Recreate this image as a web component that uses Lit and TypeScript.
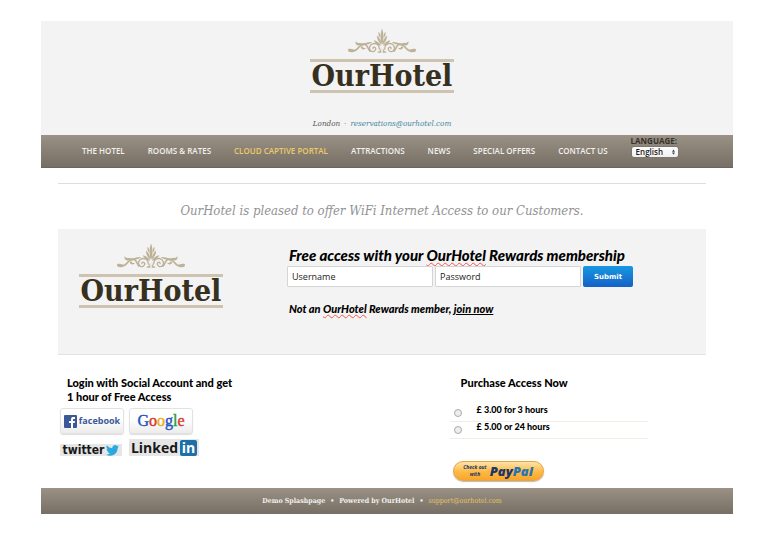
import { LitElement, html, css, svg } from "lit";
import { customElement } from "lit/decorators.js";

const half = svg`
  <path d="M271 72 C263 64 258 54 259 46 C264 48 270 58 272 68 Z"/>
  <path d="M269 76 C260 73 252 66 249 59 C257 59 265 66 271 74 Z"/>
  <path d="M271 78 C271 88 268 92 261 94 V97 H272 Z"/>
  <path d="M266 86 C267 74 258 68 249 69 C237 71 233 84 240 91 C247 97 257 91 255 83 C253 78 246 79 247 84" fill="none" stroke-width="4"/>
  <path d="M238 92 C231 86 232 73 222 72 C212 71 206 78 200 85 C194 92 182 94 175 91" fill="none" stroke-width="5"/>
  <path d="M172 86 C178 83 183 88 192 87 C188 95 174 97 172 86 Z"/>
  <path d="M244 66 C236 62 228 70 214 68 C204 67 198 68 195 62 C193 70 198 75 206 75 C220 74 232 74 244 66 Z"/>
  <path d="M210 80 C213 88 222 89 226 82 C222 84 217 82 215 77 Z"/>`;

@customElement("hotel-logo")
export class HotelLogo extends LitElement {
  static styles = css`
    :host { display: flex; flex-direction: column; align-items: center; width: 144px; }
    .ornament { width: 70px; height: 27px; display: block; fill: #bdb198; stroke: #bdb198; stroke-linecap: round; stroke-width: 0; }
    .name {
      box-sizing: border-box; width: 100%; height: 34px; margin-top: 5px;
      border-top: 3px solid #cdc3b0; border-bottom: 3px solid #cdc3b0;
      font: bold 30px/28px "DejaVu Serif Condensed", "DejaVu Serif", serif;
      color: #37301f; text-align: center; white-space: nowrap;
    }
  `;
  render() {
    return html`
      <svg class="ornament" viewBox="169 20 210 80" aria-hidden="true">
        <path d="M274 74 C268 58 268 40 274 24 C280 40 280 58 274 74 Z"/>
        <path d="M263 34 C268 37 269 43 269 52 L264 46 Z M285 34 C280 37 279 43 279 52 L284 46 Z"/>
        <g>${half}</g>
        <g transform="translate(548 0) scale(-1 1)">${half}</g>
      </svg>
      <div class="name">OurHotel</div>
    `;
  }
}

@customElement("app-root")
export class AppRoot extends LitElement {
  static styles = css`
    :host { display: block; padding: 21px 31px 36px 41px; background: #fff; font-family: Lato, "Liberation Sans", sans-serif; color: #000; }
    a { color: inherit; text-decoration: none; }
    h1, h2, p { margin: 0; }
    button, input, select { font-family: inherit; margin: 0; box-sizing: border-box; }
    fieldset { border: 0; margin: 0; padding: 0; min-width: 0; }

    .top { display: flex; flex-direction: column; align-items: center; gap: 25px; padding: 6px 10px 5px 0; background: #f3f3f3; }
    .contact { font: italic 8px/12px "DejaVu Serif Condensed", "DejaVu Serif", serif; color: #555; display: flex; gap: 4px; }
    .contact a { color: #3f87a0; }

    .bar { background: linear-gradient(#9b9186, #888074 50%, #776e65); color: #f2f0ed; }
    .nav { display: flex; align-items: center; gap: 23px; height: 33px; padding-left: 41px; box-sizing: border-box; border-bottom: 1px solid #6d655d; font: 600 8px/12px "Open Sans", sans-serif; white-space: nowrap; }
    .current { color: #edc969; }
    .language { display: flex; flex-direction: column; align-self: flex-start; color: #37322b; font: bold 8px/11px "Open Sans", sans-serif; }
    .pick { position: relative; display: block; width: 48px; height: 12px; }
    .pick select { display: block; width: 100%; height: 100%; appearance: none; border: 1px solid #7d766e; border-radius: 3px; background: linear-gradient(#fff, #f0f0f0); padding: 0 4px; font: 600 8px/10px "Open Sans", sans-serif; color: #222; }
    .pick svg { position: absolute; right: 4px; top: 3px; width: 3px; height: 6px; fill: #444; pointer-events: none; }

    .content { margin: 15px 27px 0 17px; }
    .tagline { border-top: 1px solid #dedede; padding: 18px 0 9px; font: italic 13px/18px "DejaVu Serif Condensed", "DejaVu Serif", serif; color: #929292; text-align: center; white-space: nowrap; }
    .panel { display: flex; gap: 64px; align-items: flex-start; background: #f3f3f3; border-bottom: 1px solid #e3e3e3; padding: 13px 20px 37px 21px; }
    .login { padding-top: 2px; }
    .login h2 { font: italic 900 15px/22px Lato, sans-serif; padding-left: 2px; white-space: nowrap; }
    .typo { text-decoration: underline wavy #f0584d 1px; text-underline-offset: 1px; }
    .fields { display: flex; gap: 2px; }
    .fields input { width: 146px; height: 21px; border: 1px solid #d5d5d5; border-radius: 1px; background: #fff; padding: 0 4px; font: 500 9px/14px "Open Sans", sans-serif; color: #222; }
    .fields input::placeholder { color: #222; opacity: 1; }
    .submit { width: 50px; height: 21px; border: 0; border-radius: 2px; background: linear-gradient(#1798e0, #1560c8); color: #fff; font: bold 7px/12px "DejaVu Sans", sans-serif; padding: 0; }
    .note { margin-top: 14px; padding-left: 2px; font: italic 900 11px/16px Lato, sans-serif; }
    .note .join { text-decoration: underline; }

    .options { display: grid; grid-template-columns: 391fr 256fr; padding: 21px 0 7px; }
    .options h2 { font: 900 11px/14px Lato, sans-serif; }
    .social h2 { padding-left: 9px; }
    .brands { display: grid; grid-template-columns: 64px 70px; gap: 5px; padding: 4px 0 0 2px; justify-items: start; align-items: center; }
    .brands button { border: 0; padding: 0; display: flex; align-items: center; justify-content: center; white-space: nowrap; }
    .brands .card { width: 64px; height: 26px; border: 1px solid #e2e2e2; border-radius: 3px; background: linear-gradient(#fff 40%, #ececec); box-shadow: 0 1px 1px #ddd; }
    .brands .facebook { gap: 2px; color: #3b5998; font: bold 9px/14px "Open Sans", sans-serif; }
    .facebook svg { width: 13px; height: 13px; flex: none; }
    .google { font: 16px/20px "Liberation Serif", serif; -webkit-text-stroke: 0.4px; }
    .g1 { color: #2453c4; } .g2 { color: #d43a2c; } .g3 { color: #e9b01c; } .g4 { color: #1f9a45; }
    .twitter { width: 62px; height: 12px; margin-top: 5px; background: #e6e6e6; color: #181818; gap: 2px; font: bold 12px/12px "DejaVu Sans Condensed", "DejaVu Sans", sans-serif; }
    .twitter svg { width: 13px; height: 11px; fill: #2aa9e0; flex: none; }
    .linkedin { width: 70px; height: 17px; background: #e6e6e6; color: #181818; gap: 2px; font: bold 14px/17px "Open Sans", sans-serif; }
    .in { background: #1d6fa8; color: #fff; border-radius: 2px; width: 17px; height: 16px; line-height: 15px; }

    .purchase h2 { padding-left: 11px; }
    .plans { margin-top: 15px; width: 198px; }
    .plan { display: flex; align-items: center; gap: 15px; height: 17px; box-sizing: border-box; border-bottom: 1px solid #f1ede2; font: 900 9px/12px Lato, sans-serif; }
    .plan span { padding-bottom: 7px; }
    .plan input { appearance: none; width: 8px; height: 8px; margin: 0 0 0 4px; border: 1px solid #aaa; border-radius: 50%; background: #eee; }
    .paypal { display: flex; align-items: center; justify-content: center; gap: 3px; width: 91px; height: 20px; margin: 22px 0 0 3px; padding: 0; border: 1px solid #e8a33b; border-radius: 10px; background: linear-gradient(#ffe3a8, #fdb945 55%, #f9a528); box-shadow: 0 1px 1px #bbb; color: #1d3667; }
    .checkout { display: flex; flex-direction: column; font: italic bold 5px/7px "Open Sans", sans-serif; text-align: center; }
    .pp { font: italic 800 13px/16px "Open Sans", sans-serif; }
    .pal { color: #2475b5; }

    .foot { height: 26px; display: flex; align-items: center; justify-content: center; gap: 5px; padding-right: 10px; font: bold 7px/12px "DejaVu Serif Condensed", "DejaVu Serif", serif; }
    .foot a { color: #e8c264; font-weight: normal; }
  `;

  render() {
    const links = ["THE HOTEL", "ROOMS & RATES", "CLOUD CAPTIVE PORTAL", "ATTRACTIONS", "NEWS", "SPECIAL OFFERS", "CONTACT US"];
    return html`
      <header>
        <div class="top">
          <hotel-logo></hotel-logo>
          <div class="contact"><span>London</span><span>·</span><a href="#">reservations@ourhotel.com</a></div>
        </div>
        <nav class="bar nav">
          ${links.map((t, i) => html`<a href="#" class=${i === 2 ? "current" : ""}>${t}</a>`)}
          <label class="language">LANGUAGE:
            <span class="pick">
              <select><option>English</option></select>
              <svg viewBox="0 0 4 7"><path d="M2 0L4 3H0ZM2 7L0 4H4Z"/></svg>
            </span>
          </label>
        </nav>
      </header>
      <main class="content">
        <p class="tagline">OurHotel is pleased to offer WiFi Internet Access to our Customers.</p>
        <section class="panel">
          <hotel-logo></hotel-logo>
          <form class="login">
            <h2>Free access with your <span class="typo">OurHotel</span> Rewards membership</h2>
            <div class="fields">
              <input type="text" aria-label="Username" placeholder="Username">
              <input type="password" aria-label="Password" placeholder="Password">
              <button class="submit" type="button">Submit</button>
            </div>
            <p class="note">Not an <span class="typo">OurHotel</span> Rewards member, <a class="join" href="#">join now</a></p>
          </form>
        </section>
        <div class="options">
          <section class="social">
            <h2>Login with Social Account and get<br>1 hour of Free Access</h2>
            <div class="brands">
              <button class="card facebook"><svg viewBox="0 0 13 13"><rect width="13" height="13" rx="1" fill="#3b5998"/><path d="M7 13V8H5V6H7V4.500C7 2.500 8 2 9.500 2H11V4H10C9.300 4 9 4.300 9 5V6H11L10.700 8H9V13Z" fill="#fff"/></svg>facebook</button>
              <button class="card google"><span class="g1">G</span><span class="g2">o</span><span class="g3">o</span><span class="g1">g</span><span class="g4">l</span><span class="g2">e</span></button>
              <button class="twitter">twitter<svg viewBox="0 0 24 20"><path d="M24 2.400a10 10 0 0 1-2.800.8A5 5 0 0 0 23.300.4a10 10 0 0 1-3.100 1.200A4.900 4.900 0 0 0 11.800 6 14 14 0 0 1 1.700.9a4.900 4.900 0 0 0 1.500 6.600A5 5 0 0 1 1 6.900a4.900 4.900 0 0 0 3.900 4.900 5 5 0 0 1-2.200.1 4.900 4.900 0 0 0 4.600 3.400A10 10 0 0 1 0 17.400 14 14 0 0 0 21.500 5 10 10 0 0 0 24 2.400Z"/></svg></button>
              <button class="linkedin">Linked<span class="in">in</span></button>
            </div>
          </section>
          <section class="purchase">
            <h2>Purchase Access Now</h2>
            <fieldset class="plans" aria-label="Access plans">
              <label class="plan"><input type="radio" name="plan"><span>£ 3.00 for 3 hours</span></label>
              <label class="plan"><input type="radio" name="plan"><span>£ 5.00 or 24 hours</span></label>
            </fieldset>
            <button class="paypal"><span class="checkout"><span>Check out</span><span>with</span></span><span class="pp">Pay<span class="pal">Pal</span></span></button>
          </section>
        </div>
      </main>
      <footer class="bar foot"><span>Demo Splashpage</span><span>•</span><span>Powered by OurHotel</span><span>•</span><a href="#">support@ourhotel.com</a></footer>
    `;
  }
}
